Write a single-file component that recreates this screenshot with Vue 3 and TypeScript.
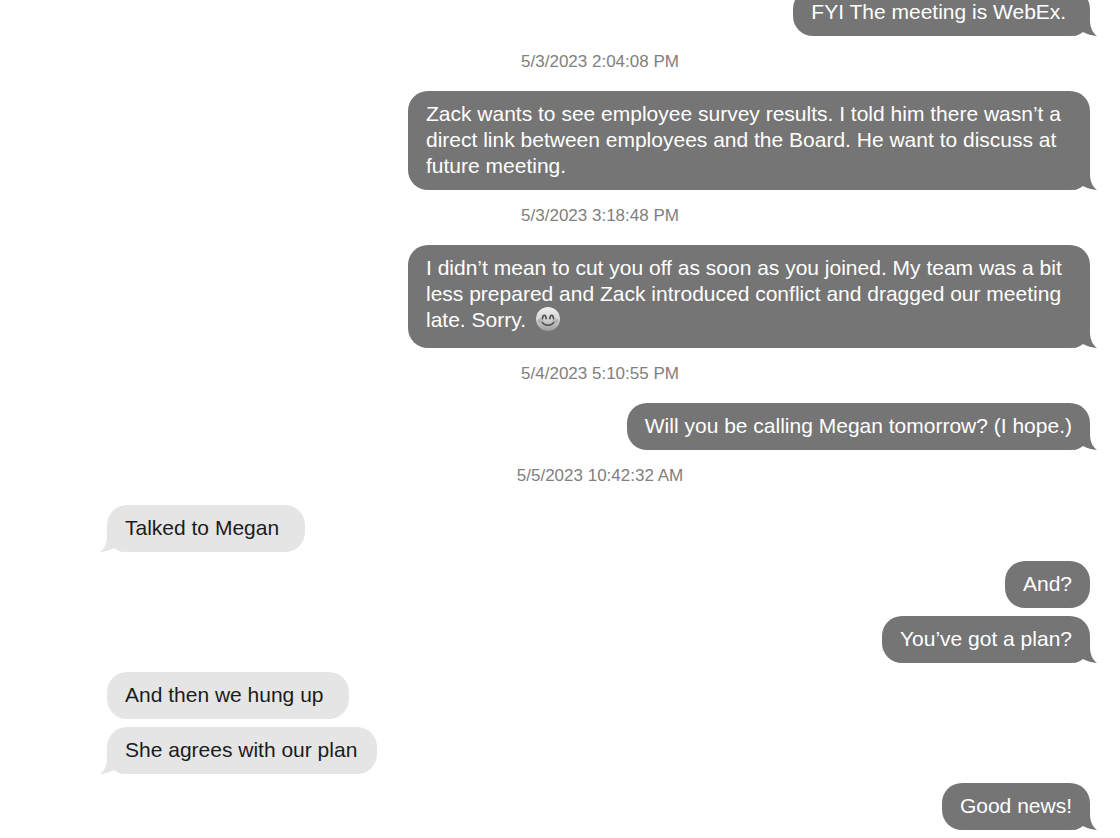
<script setup lang="ts">
interface DateEntry {
  kind: 'date'
  text: string
}

interface MessageEntry {
  kind: 'message'
  from: 'me' | 'them'
  text: string
  tail?: boolean
  smile?: boolean
}

type Entry = DateEntry | MessageEntry

const entries: Entry[] = [
  { kind: 'message', from: 'me', text: 'FYI The meeting is WebEx.\u00a0', tail: true },
  { kind: 'date', text: '5/3/2023 2:04:08 PM' },
  {
    kind: 'message',
    from: 'me',
    text: 'Zack wants to see employee survey results. I told him there wasn’t a direct link between employees and the Board. He want to discuss at future meeting.',
    tail: true,
  },
  { kind: 'date', text: '5/3/2023 3:18:48 PM' },
  {
    kind: 'message',
    from: 'me',
    text: 'I didn’t mean to cut you off as soon as you joined. My team was a bit less prepared and Zack introduced conflict and dragged our meeting late. Sorry. ',
    tail: true,
    smile: true,
  },
  { kind: 'date', text: '5/4/2023 5:10:55 PM' },
  { kind: 'message', from: 'me', text: 'Will you be calling Megan tomorrow? (I hope.)', tail: true },
  { kind: 'date', text: '5/5/2023 10:42:32 AM' },
  { kind: 'message', from: 'them', text: 'Talked to Megan\u00a0', tail: true },
  { kind: 'message', from: 'me', text: 'And?' },
  { kind: 'message', from: 'me', text: 'You’ve got a plan?', tail: true },
  { kind: 'message', from: 'them', text: 'And then we hung up\u00a0' },
  { kind: 'message', from: 'them', text: 'She agrees with our plan', tail: true },
  { kind: 'message', from: 'me', text: 'Good news!', tail: true },
]

function spacing(index: number): string {
  const current = entries[index]
  const previous = entries[index - 1]
  if (!previous || current.kind === 'date' || previous.kind === 'date') return ''
  return current.from === previous.from ? 'follows-same' : 'follows-other'
}
</script>

<template>
  <main class="thread">
    <template v-for="(entry, index) in entries" :key="index">
      <time v-if="entry.kind === 'date'" class="date">{{ entry.text }}</time>
      <div v-else class="row" :class="[entry.from, spacing(index)]">
        <p class="bubble">
          {{ entry.text }}
          <svg v-if="entry.smile" class="smile" viewBox="0 0 24 24" role="img" aria-label="Smiling face">
            <defs>
              <linearGradient id="face" x1="0" y1="0" x2="0" y2="1">
                <stop offset="0" stop-color="#f0f0f0" />
                <stop offset="0.55" stop-color="#cfcfcf" />
                <stop offset="1" stop-color="#9a9a9a" />
              </linearGradient>
            </defs>
            <circle cx="12" cy="12" r="12" fill="url(#face)" />
            <ellipse cx="4.5" cy="14" rx="3" ry="2.2" fill="#999" opacity="0.45" />
            <ellipse cx="19.5" cy="14" rx="3" ry="2.2" fill="#999" opacity="0.45" />
            <path
              d="M6.4 11.6C7 7.2 9.6 7.2 10.2 11.6M13.8 11.6C14.4 7.2 17 7.2 17.6 11.6M6.4 15.6C9 19.2 15 19.2 17.6 15.6"
              fill="none"
              stroke="#4c4c4c"
              stroke-width="1.6"
              stroke-linecap="round"
            />
          </svg>
          <svg v-if="entry.tail" class="tail" viewBox="0 0 24 20" aria-hidden="true">
            <path d="M0 0H17V4C17 12 20 17 24 20C19 19.5 14 18.5 10 16C7 18 4 20 0 20Z" />
          </svg>
        </p>
      </div>
    </template>
  </main>
</template>

<style>
body {
  margin: 0;
  background: #fff;
}
</style>

<style scoped>
.thread {
  display: flex;
  flex-direction: column;
  margin-top: -11px;
  padding: 0 20px 0 100px;
  font-family: "Liberation Sans", Arial, sans-serif;
}

.date {
  padding: 15px 0 18px;
  color: #808080;
  font-size: 17px;
  line-height: 22px;
  text-align: center;
}

.row {
  display: flex;
  padding: 0 10px 0 7px;
}

.me {
  justify-content: flex-end;
}

.follows-same {
  margin-top: 8px;
}

.follows-other {
  margin-top: 9px;
}

.bubble {
  position: relative;
  box-sizing: border-box;
  max-width: 682px;
  margin: 0;
  padding: 10px 18px 11px;
  border-radius: 20px;
  font-size: 21px;
  line-height: 26px;
}

.me .bubble {
  background: #757575;
  color: #fff;
}

.them .bubble {
  padding-right: 20px;
  background: #e5e5e5;
  color: #1c1c1c;
}

.smile {
  width: 24px;
  height: 24px;
  margin: 0 0 6px 4px;
  vertical-align: -10px;
}

.tail {
  position: absolute;
  right: -7px;
  bottom: 0;
  width: 24px;
  height: 20px;
  fill: #757575;
}

.them .tail {
  right: auto;
  left: -7px;
  fill: #e5e5e5;
  transform: scaleX(-1);
}
</style>
